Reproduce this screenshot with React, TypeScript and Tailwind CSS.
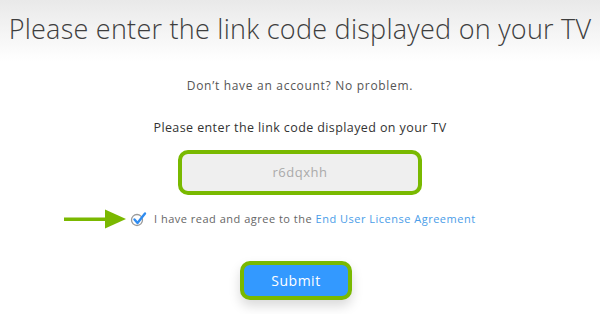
import React from 'react';

function CheckMark() {
  return (
    <svg width="20" height="16" viewBox="0 0 20 16" className="shrink-0">
      <circle cx="7" cy="9" r="5.5" fill="none" stroke="#9a9a9a" strokeWidth="1.3" />
      <path d="M4.5 8.5 L7.5 12 L15 2.5" fill="none" stroke="#2f8cf0" strokeWidth="2.4" strokeLinecap="round" strokeLinejoin="round" />
    </svg>
  );
}

function Arrow() {
  return (
    <svg width="62" height="22" viewBox="0 0 62 22" className="shrink-0">
      <rect x="0" y="9.5" width="44" height="3.5" fill="#7ab800" />
      <polygon points="41,1.5 62,11 41,20.5" fill="#7ab800" />
    </svg>
  );
}

export default function App() {
  return (
    <div className="w-[600px] h-[314px] overflow-hidden bg-white" style={{ fontFamily: '"Open Sans", "Liberation Sans", sans-serif' }}>
      <header className="h-[62px] bg-gradient-to-b from-[#e9e9e9] to-white flex items-center justify-center pb-[3px]">
        <h1 className="text-[27px] font-light text-[#3e3e3e] tracking-[0.25px] whitespace-nowrap">
          Please enter the link code displayed on your TV
        </h1>
      </header>
      <main className="flex flex-col items-center">
        <p className="mt-[15px] text-[12px] text-[#555] tracking-[0.7px]">Don’t have an account? No problem.</p>
        <p className="mt-[24px] text-[12.5px] text-[#333] tracking-[0.4px]">Please enter the link code displayed on your TV</p>
        <div className="mt-[12px] w-[244px] h-[45px] rounded-[10px] border-4 border-[#79b900] bg-[#efefef] flex items-center justify-center">
          <span className="text-[13px] text-[#aaa] tracking-[0.5px]">r6dqxhh</span>
        </div>
        <div className="mt-[13px] flex items-center self-start pl-[64px] gap-[4px]">
          <Arrow />
          <CheckMark />
          <span className="text-[11px] text-[#666] tracking-[0.5px]">
            I have read and agree to the <span className="text-[#4a9de8]">End User License Agreement</span>
          </span>
        </div>
        <button className="mt-[31px] mr-[8px] w-[112px] h-[39px] rounded-[10px] border-4 border-[#79b900] bg-[#3399ff] text-white text-[14px] tracking-[0.5px] shadow-[0_6px_12px_rgba(0,0,0,0.15)]">
          Submit
        </button>
      </main>
    </div>
  );
}
